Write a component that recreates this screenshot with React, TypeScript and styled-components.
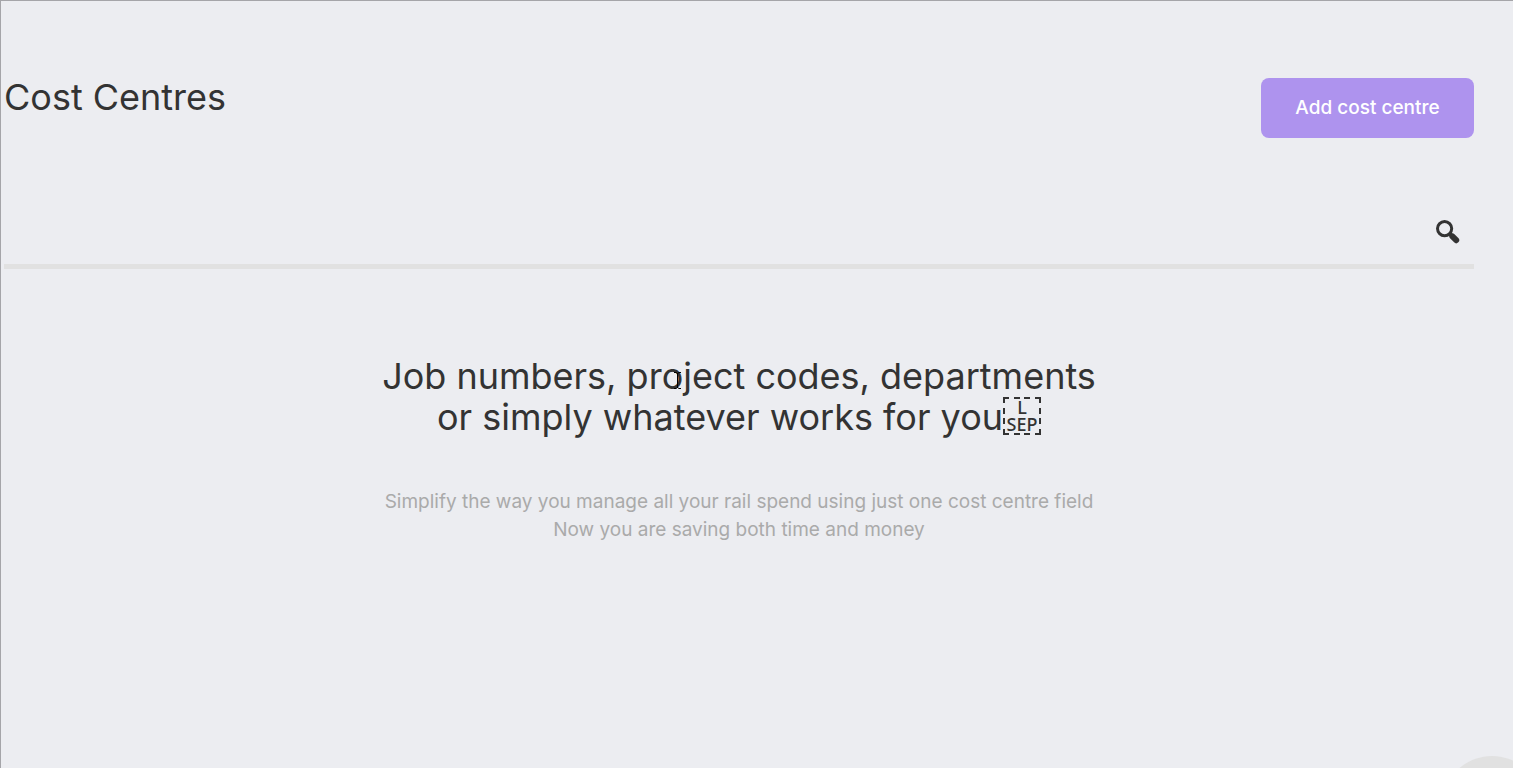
import React from 'react';
import styled, { createGlobalStyle } from 'styled-components';

const GlobalStyle = createGlobalStyle`
  *, *::before, *::after {
    box-sizing: border-box;
  }

  body {
    margin: 0;
    background: #ecedf1;
    color: #333333;
    font-family: Inter, 'Liberation Sans', sans-serif;
  }

  h1, h2, p {
    margin: 0;
    font-weight: 400;
  }
`;

const Page = styled.div`
  position: relative;
  min-height: 100vh;
  padding: 77px 39px 0 3px;
  border-top: 1px solid #a5a5a9;
  border-left: 1px solid #a5a5a9;
  overflow: hidden;
`;

const Header = styled.header`
  display: flex;
  justify-content: space-between;
  align-items: flex-start;
`;

const Title = styled.h1`
  font-size: 36px;
  line-height: 38px;
`;

const AddButton = styled.button`
  min-width: 213px;
  height: 60px;
  padding: 0 32px;
  border: 0;
  border-radius: 8px;
  background: #ae93ee;
  color: #ffffff;
  font-family: inherit;
  font-size: 19px;
  font-weight: 500;
  line-height: 28px;
  cursor: pointer;
`;

const SearchBar = styled.form`
  display: flex;
  align-items: center;
  height: 69px;
  margin-top: 62px;
  padding-right: 14px;
  border-bottom: 5px solid #e1e1e1;
`;

const SearchInput = styled.input`
  flex: 1;
  min-width: 0;
  height: 60px;
  border: 0;
  outline: 0;
  background: transparent;
  color: inherit;
  font-family: inherit;
  font-size: 19px;
`;

const SearchButton = styled.button`
  display: flex;
  padding: 0;
  border: 0;
  background: transparent;
  color: #333333;
  cursor: pointer;
`;

const EmptyState = styled.main`
  padding: 87px 0 40px;
  text-align: center;
`;

const Heading = styled.h2`
  font-size: 36px;
  line-height: 41px;
`;

const Line = styled.span`
  display: block;
`;

const Description = styled.p`
  margin-top: 50px;
  color: #aaaaaa;
  font-size: 19px;
  line-height: 28px;
`;

const Separator = styled.span`
  position: relative;
  display: inline-flex;
  flex-direction: column;
  align-items: center;
  justify-content: center;
  width: 38px;
  height: 38px;
  vertical-align: top;
  font-family: 'Noto Sans', sans-serif;
  font-size: 18px;
  font-weight: 500;
  line-height: 17px;
`;

const SeparatorFrame = styled.svg`
  position: absolute;
  inset: 0;
`;

const ChatButton = styled.button`
  position: absolute;
  right: -29px;
  bottom: -88px;
  width: 100px;
  height: 100px;
  border: 0;
  border-radius: 50%;
  background: #e1e1e1;
`;

const TextCursor = styled.svg`
  position: absolute;
  right: 2px;
  bottom: 9px;
`;

const CursorAnchor = styled.span`
  position: relative;
`;

function SearchIcon() {
  return (
    <svg width="24" height="24" viewBox="0 0 24 24" fill="none" stroke="currentColor" aria-hidden="true">
      <circle cx="8.6" cy="8.6" r="7.1" strokeWidth="3" />
      <path d="M13.6 13.6l3 3" strokeWidth="4" />
      <path d="M16.4 16.4l3.8 3.8" strokeWidth="6" strokeLinecap="round" />
    </svg>
  );
}

function LineSeparator() {
  return (
    <Separator>
      <SeparatorFrame width="38" height="38" viewBox="0 0 38 38" fill="none" stroke="#333333" strokeWidth="2" aria-hidden="true">
        <path d="M1 6V1h5M11 1h6M21 1h6M32 1h5v5M37 11v6M37 21v6M37 32v5h-5M27 37h-6M17 37h-6M6 37H1v-5M1 27v-6M1 17v-6" />
      </SeparatorFrame>
      <span>L</span>
      <span>SEP</span>
    </Separator>
  );
}

export default function App() {
  return (
    <>
      <GlobalStyle />
      <Page>
        <Header>
          <Title>Cost Centres</Title>
          <AddButton type="button">Add cost centre</AddButton>
        </Header>
        <SearchBar role="search" onSubmit={(event) => event.preventDefault()}>
          <SearchInput type="search" aria-label="Search cost centres" />
          <SearchButton type="submit" aria-label="Search">
            <SearchIcon />
          </SearchButton>
        </SearchBar>
        <EmptyState>
          <Heading>
            <Line>
              Job numbers, pr
              <CursorAnchor>
                o
                <TextCursor width="7" height="17" viewBox="0 0 7 17" fill="none" stroke="#000000" aria-hidden="true">
                  <path d="M0 .5h2l1.5 1 1.5-1h2M3.5 1v15M0 16.5h2l1.5-1 1.5 1h2" />
                </TextCursor>
              </CursorAnchor>
              ject codes, departments
            </Line>
            <Line>
              or simply whatever works for you
              <LineSeparator />
            </Line>
          </Heading>
          <Description>
            <Line>Simplify the way you manage all your rail spend using just one cost centre field</Line>
            <Line>Now you are saving both time and money</Line>
          </Description>
        </EmptyState>
        <ChatButton type="button" aria-label="Open chat" />
      </Page>
    </>
  );
}
